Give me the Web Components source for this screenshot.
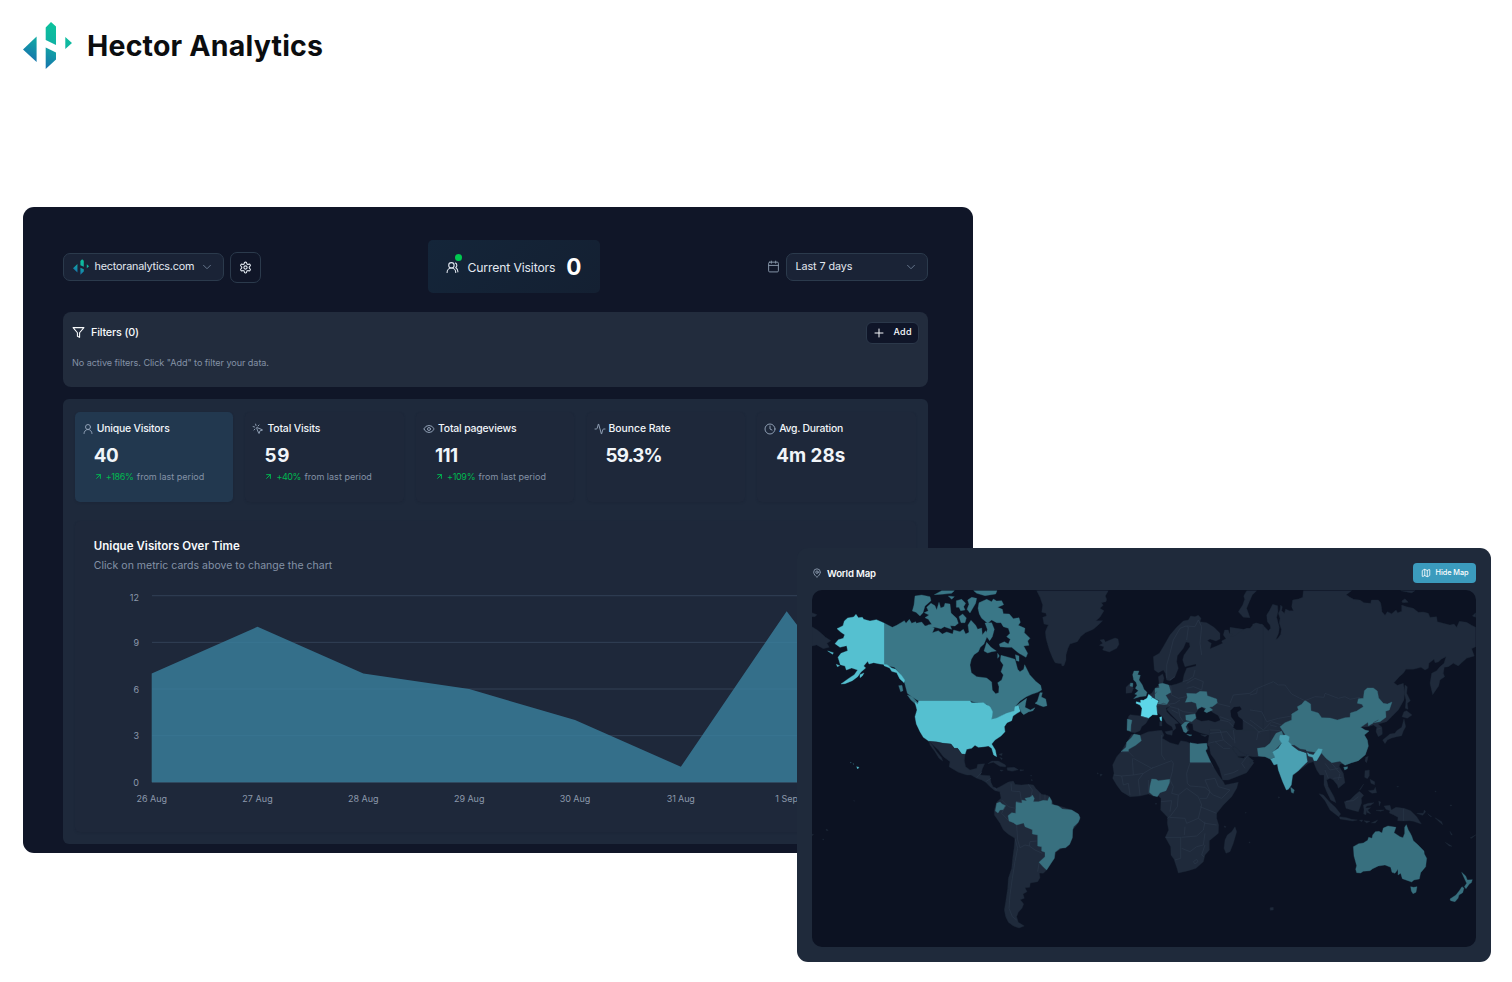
<!DOCTYPE html>
<html lang="en"><head><meta charset="utf-8"><title>Hector Analytics</title>
<style>
html,body{margin:0;height:982px;background:#fff;overflow:hidden;font-family:Inter,"Liberation Sans",sans-serif}
</style></head><body>
<hector-page></hector-page>
<script>
const define=(name,html,setup)=>{
  const t=document.createElement('template');t.innerHTML=html;
  customElements.define(name,class extends HTMLElement{
    constructor(){super();this.attachShadow({mode:'open'}).append(t.content.cloneNode(true));}
    connectedCallback(){if(setup)setup(this,this.shadowRoot);}
  });
};

/* Single-line label whose tracking is tuned to a target width */
define('fit-label',`<style>:host{display:block;line-height:1.2;white-space:nowrap}span{display:inline-block}</style><span><slot></slot></span>`,(el,r)=>{
  const s=r.querySelector('span'),w=+el.getAttribute('w'),n=el.textContent.length;
  if(w&&n>1){const d=(w-s.getBoundingClientRect().width)/(n-1);s.style.letterSpacing=d+'px';s.style.marginRight=-d+'px';}
});

const icons={
 gear:'<path d="M12.22 2h-.44a2 2 0 0 0-2 2v.18a2 2 0 0 1-1 1.73l-.43.25a2 2 0 0 1-2 0l-.15-.08a2 2 0 0 0-2.73.73l-.22.38a2 2 0 0 0 .73 2.73l.15.1a2 2 0 0 1 1 1.72v.51a2 2 0 0 1-1 1.74l-.15.09a2 2 0 0 0-.73 2.73l.22.38a2 2 0 0 0 2.73.73l.15-.08a2 2 0 0 1 2 0l.43.25a2 2 0 0 1 1 1.73V20a2 2 0 0 0 2 2h.44a2 2 0 0 0 2-2v-.18a2 2 0 0 1 1-1.73l.43-.25a2 2 0 0 1 2 0l.15.08a2 2 0 0 0 2.73-.73l.22-.39a2 2 0 0 0-.73-2.73l-.15-.08a2 2 0 0 1-1-1.74v-.5a2 2 0 0 1 1-1.74l.15-.09a2 2 0 0 0 .73-2.73l-.22-.38a2 2 0 0 0-2.73-.73l-.15.08a2 2 0 0 1-2 0l-.43-.25a2 2 0 0 1-1-1.73V4a2 2 0 0 0-2-2z"/><circle cx="12" cy="12" r="3"/>',
 down:'<path d="m5 8.5 7 7 7-7"/>',
 users:'<path d="M18 21a8 8 0 0 0-16 0"/><circle cx="10" cy="8" r="5"/><path d="M22 20c0-3.37-2-6.5-4-8a5 5 0 0 0-.45-8.3"/>',
 user:'<circle cx="12" cy="8" r="5"/><path d="M20 21a8 8 0 0 0-16 0"/>',
 calendar:'<path d="M8 2v4M16 2v4M3 10h18"/><rect width="18" height="18" x="3" y="4" rx="2"/>',
 funnel:'<path d="M22 3H2l8 9.46V19l4 2v-8.54L22 3z"/>',
 plus:'<path d="M4 12h16M12 4v16"/>',
 click:'<path d="M14 4.1 12 6M5.1 8l-2.9-.8M6 12l-1.9 2M7.2 2.2 8 5.1M9.04 9.69a.5.5 0 0 1 .65-.65l11 4.5a.5.5 0 0 1-.07.95l-4.35 1.04a1 1 0 0 0-.74.74l-1.04 4.35a.5.5 0 0 1-.95.07z"/>',
 eye:'<path d="M2.06 12.35a1 1 0 0 1 0-.7 10.75 10.75 0 0 1 19.88 0 1 1 0 0 1 0 .7 10.75 10.75 0 0 1-19.88 0"/><circle cx="12" cy="12" r="3"/>',
 activity:'<path d="M22 12h-2.48a2 2 0 0 0-1.93 1.46l-2.35 8.36a.25.25 0 0 1-.48 0L9.24 2.18a.25.25 0 0 0-.48 0l-2.35 8.36A2 2 0 0 1 4.49 12H2"/>',
 clock:'<circle cx="12" cy="12" r="10"/><path d="M12 6v6l4 2"/>',
 arrow:'<path d="M7 7h10v10M7 17 17 7"/>',
 pin:'<path d="M20 10c0 4.99-5.54 10.19-7.4 11.8a1 1 0 0 1-1.2 0C9.54 20.19 4 14.99 4 10a8 8 0 0 1 16 0"/><circle cx="12" cy="10" r="3"/>',
 map:'<path d="M14.1 5.55a2 2 0 0 0 1.8 0l3.65-1.83A1 1 0 0 1 21 4.62v12.76a1 1 0 0 1-.55.9l-4.55 2.27a2 2 0 0 1-1.8 0l-4.2-2.1a2 2 0 0 0-1.8 0l-3.65 1.83A1 1 0 0 1 3 19.38V6.62a1 1 0 0 1 .55-.9L8.1 3.45a2 2 0 0 1 1.8 0zM15 5.76v15M9 3.24v15"/>'
};
define('line-icon',`<style>:host{display:block;flex:none}svg{display:block}</style><svg viewBox="0 0 24 24" fill="none" stroke="currentColor" stroke-linecap="round" stroke-linejoin="round"></svg>`,(el,r)=>{
  const s=r.querySelector('svg'),z=el.getAttribute('size');s.setAttribute('width',z);s.setAttribute('height',z);
  s.setAttribute('stroke-width',el.getAttribute('weight')||2);s.innerHTML=icons[el.getAttribute('name')];
});
define('hector-logo',`<style>:host{display:block;flex:none}svg{display:block;width:100%;height:100%}</style>
<svg viewBox="0 0 49 47"><defs><linearGradient id="g" gradientUnits="userSpaceOnUse" x1="34" y1="4" x2="14" y2="44"><stop offset="0" stop-color="#0cc29c"/><stop offset=".35" stop-color="#10b4a2"/><stop offset="1" stop-color="#176fae"/></linearGradient></defs>
<g fill="url(#g)"><path d="M0 27.5 13.6 14.4V40zM22.7 5.5 28 0 33 4.5V23L22.7 18zM22.7 25.5 33 30.5V37.5L22.7 47zM42.3 15 49 21 42.3 27z"/></g></svg>`);

define('site-select',`<style>:host{display:flex;box-sizing:border-box;width:161px;height:28px;border:1px solid #2b3a4c;border-radius:7px;background:#1a2336;color:#e2e8f0;align-items:center;padding:0 10px 0 9px;font-size:10.8px}
hector-logo{width:16px;height:16px;margin-right:6px}fit-label{padding-top:2px}line-icon{color:#64748b;margin-left:auto}</style>
<hector-logo></hector-logo><fit-label w="100">hectoranalytics.com</fit-label><line-icon name="down" size="12" weight="2"></line-icon>`);
define('period-select',`<style>:host{display:flex;align-items:center;color:#e2e8f0;font-size:10.8px;gap:6px}line-icon{color:#8796a9}fit-label{padding-top:2px}
div{display:flex;align-items:center;box-sizing:border-box;width:142.5px;height:28px;border:1px solid #2b3a4c;border-radius:7px;background:#1a2336;padding:0 10px 0 9px;justify-content:space-between}div line-icon{color:#64748b}</style>
<line-icon name="calendar" size="13" weight="1.8"></line-icon><div><fit-label w="57">Last 7 days</fit-label><line-icon name="down" size="12" weight="2"></line-icon></div>`);
define('icon-button',`<style>:host{display:grid;place-items:center;box-sizing:border-box;width:31px;height:31px;border:1px solid #2b3a4c;border-radius:7px;color:#e2e8f0}</style><line-icon name="gear" size="13"></line-icon>`);
define('live-visitors',`<style>:host{display:flex;box-sizing:border-box;width:172px;height:53px;border-radius:5px;background:linear-gradient(135deg,#142539,#142032);align-items:center;padding:0 18px;color:#e2e8f0;font-size:12.2px}
.u{position:relative;margin:1px 9px 0 0}.u i{position:absolute;left:9px;top:-7px;width:7px;height:7px;border-radius:50%;background:#00c950}fit-label{padding-top:2px}b{font-size:22.5px;line-height:1;color:#fff;margin:1px 0 0 auto}</style>
<span class="u"><line-icon name="users" size="13"></line-icon><i></i></span><fit-label w="88">Current Visitors</fit-label><b>0</b>`);
define('filter-panel',`<style>:host{display:block;box-sizing:border-box;height:74.5px;border-radius:8px;background:#222c3d;color:#f8fafc;padding:9.4px 9.5px 0}
.r{display:flex;align-items:center;font-size:10.8px;font-weight:500;height:22px}.r>line-icon{margin-right:6px}.r>fit-label{padding-top:1px}
button{all:unset;box-sizing:border-box;margin-left:auto;width:53px;height:22px;display:flex;align-items:center;justify-content:space-between;background:#0f1528;border:1px solid #2b384a;border-radius:6px;padding:0 6px;font-size:9px;font-weight:500}
.n{font-size:9.1px;color:#8492a6;margin-top:14px}</style>
<div class="r"><line-icon name="funnel" size="13"></line-icon><fit-label w="48">Filters (0)</fit-label><button><line-icon name="plus" size="12"></line-icon><fit-label w="18">Add</fit-label></button></div><fit-label class="n" w="197">No active filters. Click "Add" to filter your data.</fit-label>`);

define('metric-card',`<style>:host{display:block;box-sizing:border-box;height:90px;border-radius:5px;color:#f1f5f9;background:#1e283a;padding:9px 7px;box-shadow:0 1px 2px #1a243566}
:host([active]){background:#22384f}
.h{display:flex;align-items:center;gap:3px;font-size:10.4px;font-weight:500;height:14px}.h line-icon{color:#94a3b8;margin-top:2px}.h fit-label{padding-top:2px}
.v{font-size:18.8px;font-weight:700;margin:10.4px 0 0 12px}.t{display:flex;align-items:center;font-size:9px;color:#8492a6;margin:3.6px 0 0 12px}
.t line-icon,.g{color:#00b850}.g{margin:0 3px 0 3px}.t[hidden]{display:none}</style>
<div class="h"></div><div class="v"></div><div class="t" hidden></div>`,(el,r)=>{
  const a=k=>el.getAttribute(k);
  r.querySelector('.h').innerHTML=`<line-icon name="${a('icon')}" size="12" weight="1.9"></line-icon><fit-label w="${a('lw')}">${a('label')}</fit-label>`;
  r.querySelector('.v').innerHTML=`<fit-label w="${a('vw')}">${a('value')}</fit-label>`;
  if(a('trend')){const t=r.querySelector('.t');t.hidden=false;t.innerHTML=`<line-icon name="arrow" size="9" weight="2.6"></line-icon><fit-label class="g" w="${a('tw')}">${a('trend')}</fit-label><fit-label w="67.5">from last period</fit-label>`;}
});

define('visitors-chart',`<style>:host{display:block;box-sizing:border-box;height:311px;border-radius:5px;background:#1e283a;padding:19.5px 0 0 19px;box-shadow:0 1px 2px #1a243566}
.a{font-size:11.5px;font-weight:600;color:#f8fafc}.b{font-size:10.5px;color:#8492a6;margin-top:6px}svg{display:block;margin:10.5px 0 0 -19px}text{font-size:9px;fill:#8c99ac}</style>
<fit-label class="a" w="146">Unique Visitors Over Time</fit-label><fit-label class="b" w="238.5">Click on metric cards above to change the chart</fit-label>
<svg width="841" height="230" viewBox="75 583 841 230"></svg>`,(el,r)=>{
  const v=[7,10,7,6,4,1,11,2],y=n=>782.3-15.55*n,x=i=>151.7+105.83*i;let s='';
  for(const n of [12,9,6,3,0])s+=`<path d="M152 ${y(n)}H900" stroke="#324055" stroke-width="1"/><text x="139" y="${y(n)+(n==12?5.6:3.6)}" text-anchor="end">${n}</text>`;
  s+=`<path d="M${x(0)} ${y(0)}L${v.map((n,i)=>x(i)+' '+y(n)).join('L')}V${y(0)}Z" fill="#3a819f" fill-opacity=".8"/>`;
  ['26 Aug','27 Aug','28 Aug','29 Aug','30 Aug','31 Aug','1 Sep'].forEach((t,i)=>s+=`<text x="${x(i)}" y="801.5" text-anchor="middle"${i<6?` textLength="${i==5?28:30.5}"`:''}>${t}</text>`);
  r.querySelector('svg').innerHTML=s;
});

define('analytics-dashboard',`<style>:host{display:block;box-sizing:border-box;width:950px;height:646px;border-radius:11px;background:#101628;padding:33.4px 45px 0 39.5px;overflow:hidden}
header{display:flex;align-items:center;justify-content:space-between}.l{display:flex;align-items:center;gap:6px}icon-button{margin-top:1px}filter-panel{margin-top:19px}
.p{box-sizing:border-box;margin-top:12.6px;background:#1e293b;border-radius:6px;padding:12.5px 12.3px;height:444.5px}.m{display:grid;grid-template-columns:repeat(5,158.5px);justify-content:space-between}visitors-chart{margin-top:19px}</style>
<header><div class="l"><site-select></site-select><icon-button></icon-button></div><live-visitors></live-visitors><period-select></period-select></header>
<filter-panel></filter-panel>
<div class="p"><div class="m">
<metric-card active icon="user" label="Unique Visitors" lw="73" value="40" vw="25" trend="+186%" tw="28"></metric-card>
<metric-card icon="click" label="Total Visits" lw="53" value="59" vw="25" trend="+40%" tw="25"></metric-card>
<metric-card icon="eye" label="Total pageviews" lw="78.5" value="111" vw="23" trend="+109%" tw="28.5"></metric-card>
<metric-card icon="activity" label="Bounce Rate" lw="62" value="59.3%" vw="57"></metric-card>
<metric-card icon="clock" label="Avg. Duration" lw="64" value="4m 28s" vw="69"></metric-card>
</div><visitors-chart></visitors-chart></div>`);

/* Map regions: [origin x, origin y, shapes]; shape points are in thirds of a pixel */
const L='#1f2a3b',CA='#3a7787',US='#55c0d0',T='#38707f',SEA='#0c1222',IN='#4aa0b2',FR='#5dd6e8';
const regions=[
[1250,540,[
[L,'-60,262 -20,268 0,265 8,256 18,248 28,254 35,252 45,262 55,272 62,265 60,255 52,245 50,225 58,212 68,193 83,197 84,215 80,232 88,262 86,280 78,298 84,295 92,283 94,268 88,250 90,235 85,220 90,210 92,195 97,200 95,212 103,220 107,207 118,212 130,212 125,200 128,180 145,177 158,172 160,152 305,152 289,164 300,172 311,178 330,180 342,188 362,190 364,180 385,180 392,188 395,205 396,215 405,226 412,215 425,221 438,210 443,218 455,214 455,195 470,200 490,205 505,217 520,216 535,220 540,232 560,230 562,245 580,250 600,255 612,252 620,262 628,244 650,247 665,256 677,262 677,320 665,326 673,348 650,355 635,368 625,378 610,370 595,380 583,382 580,400 584,410 570,420 566,438 548,464 540,430 545,400 560,392 568,382 582,370 588,350 575,357 565,366 555,368 552,358 537,370 535,385 525,390 513,382 490,388 468,388 460,400 448,410 432,428 442,436 460,430 464,455 462,480 445,510 425,530 410,545 385,552 396,562 397,583 385,590 378,575 380,562 370,555 355,560 332,562 345,570 357,573 343,585 352,600 355,620 345,645 325,662 305,668 290,672 270,672 268,680 280,700 285,728 265,745 262,735 250,720 240,715 230,720 235,740 252,770 258,788 242,780 230,755 222,735 222,705 210,705 200,690 190,665 175,670 125,710 118,745 110,748 95,710 82,670 65,660 50,650 25,648 -60,650'],
[L,'455,183 465,176 475,187 458,188','452,152 495,152 485,159 470,156','667,228 677,218 677,232','465,435 472,440 470,460 481,482 472,490 474,508 466,505 468,480 463,460','462,515 470,512 486,525 472,535 456,530','462,537 467,560 460,573 455,587 440,590 425,594 412,600 405,611 398,600 420,582 435,580 440,572 455,562'],
[T,'165,481 182,492 183,512 205,519 215,533 240,534 262,540 285,533 300,532 301,519 320,513 340,500 336,493 322,490 325,476 340,475 343,452 352,444 370,444 382,453 386,474 400,490 412,492 426,486 418,510 407,514 408,532 390,545 371,548 355,558 354,547 332,562 345,570 357,573 343,585 352,600 355,618 346,644 325,662 305,668 285,676 270,664 245,668 228,655 215,640 185,635 150,630 120,612 110,590 100,575 90,560 105,548 125,540 125,522 145,510 142,500 155,493']
]],
[1020,540,[
[L,'50,152 60,172 68,195 65,217 78,220 79,228 68,232 72,252 85,255 80,265 76,275 78,295 82,310 88,330 98,355 105,368 112,370 124,371 126,378 132,377 138,360 138,345 144,325 150,312 172,305 182,290 196,278 220,268 235,255 248,242 228,242 240,232 252,212 240,205 250,196 244,188 258,185 260,178 256,168 265,152'],
[L,'240,300 252,298 256,306 270,300 285,294 294,297 297,313 290,325 268,336 248,330 252,320 238,316 248,310'],
[L,'680,152 710,152 697,165 688,185 680,205 690,233 670,232 655,215 668,195 674,178 671,168'],
[L,'400,350 418,340 430,320 450,285 470,262 490,243 505,240 512,228 525,230 535,226 543,235 540,245 560,248 582,262 600,280 600,297 588,303 570,297 562,302 574,310 570,326 590,318 608,310 605,303 618,296 610,285 614,270 625,270 628,280 638,283 632,290 642,289 665,272 680,265 700,268 698,252 712,250 730,255 730,585 565,585 540,578 520,570 518,552 505,548 495,545 503,560 508,572 495,575 485,555 470,540 450,520 440,508 448,500 438,504 440,515 452,528 466,540 476,550 464,552 468,565 460,572 456,560 440,550 428,530 415,520 400,500 390,475 385,465 395,460 405,445 418,435 415,410 428,402 432,415 428,432 445,436 455,436 470,432 488,425 492,405 500,385 528,378 528,372 495,380 488,360 492,345 510,320 508,308 498,306 490,325 472,347 470,365 475,385 465,410 450,422 440,420 436,400 430,390 415,398 403,390'],
[L,'325,530 330,524 363,528 385,538 378,550 365,560 360,572 345,578 335,577 322,570 325,545','318,442 332,428 340,445 335,458 318,460','435,575 458,571 456,586 440,582','419,545 426,543 426,558 419,558'],
[SEA,'530,537 528,520 538,505 548,503 556,511 560,518 572,512 576,517 594,527 600,540 585,546 566,540 545,543','632,512 642,502 660,500 664,508 651,517 655,530 668,540 668,568 655,574 640,562 646,546 634,530'],
[T,'500,460 528,461 540,454 560,455 562,467 590,477 592,489 577,500 568,501 578,510 560,518 552,514 558,505 545,500 532,508 528,490 515,485 496,487 502,472','497,526 525,522 528,534 515,545 498,540','484,556 495,546 509,545 502,552 497,560 503,572 498,579 491,575','500,583 516,585 510,588','322,537 336,541 333,555 332,574 321,571','405,445 418,443 416,432 428,430 446,435 453,457 437,466 447,482 440,494 414,492 418,482 405,475','342,393 357,393 353,404 361,406 357,420 367,435 372,448 381,457 378,468 360,470 341,476 352,465 344,462 355,452 346,445 351,436 348,427 341,420 338,404','332,429 339,430 338,440 330,438'],
[CA,'45,490 52,484 60,458 67,458 64,471 77,477 81,497 70,500 58,496'],
[FR,'386,463 399,474 415,483 409,498 412,525 398,524 385,535 363,528 366,505 360,495 348,490 349,485 362,488 362,480 370,481 381,475','419,532 425,530 425,543 421,541']
]],
[795,540,[
[CA,'267,249 292,262 305,256 318,248 328,242 333,250 343,238 350,250 362,245 364,250 380,246 390,258 402,256 418,265 412,278 430,272 442,282 455,276 473,282 476,270 495,275 505,268 512,282 522,277 519,255 528,241 542,256 548,268 560,264 562,284 572,272 579,283 567,312 556,322 550,335 537,344 529,358 525,375 529,398 545,410 575,414 590,426 592,450 602,461 611,458 612,440 608,428 620,420 625,405 618,395 625,375 616,362 618,346 645,353 660,358 668,388 675,395 686,388 689,374 698,392 704,404 722,424 737,436 740,450 728,457 710,463 694,470 675,483 660,500 678,487 695,475 692,490 690,502 706,510 720,503 714,512 700,516 686,524 680,518 672,500 662,514 635,522 605,534 590,538 592,515 575,492 548,489 525,483 371,483 350,470 337,460 328,426 316,402 298,382 267,375'],
[CA,'360,168 380,165 405,170 408,182 390,198 384,218 375,228 363,217 352,213 357,195','395,202 408,190 420,197 425,210 432,187 437,204 447,200 450,190 465,192 468,219 485,235 490,250 480,258 466,257 470,268 448,260 438,266 420,262 400,263 398,255 410,253 400,238 390,233 402,225 388,218 400,212','418,164 440,152 478,152 470,160 440,163','536,152 606,152 602,162 570,167 545,160','484,182 500,178 512,190 506,200 510,210 497,212 492,202 484,202','518,180 530,172 545,175 542,190 525,219 516,208 522,193','492,230 503,222 514,234 510,248 498,248','549,205 552,188 575,178 590,185 595,177 605,183 620,182 626,194 608,202 622,208 625,221 643,222 655,236 672,233 676,247 670,256 690,265 688,278 705,295 698,303 702,316 686,318 698,340 693,352 672,340 650,322 635,322 615,320 613,312 628,305 640,312 646,298 635,290 645,280 640,265 625,260 618,248 605,248 590,240 578,250 560,235 553,222','570,249 590,248 598,268 592,290 584,302 573,287 577,268','567,333 575,307 588,322 604,333 590,335 578,339','608,340 613,348 608,355','661,344 672,348 672,364 664,362','337,465 352,470 370,490 364,494 348,480','311,437 321,436 324,452 317,455','460,168 478,170 470,178'],
[US,'267,249 244,239 225,243 206,238 202,232 190,233 183,223 176,231 158,234 148,243 144,257 126,266 138,277 149,284 145,295 130,299 120,311 135,322 155,317 158,332 138,340 129,352 136,374 150,378 154,390 170,384 188,390 178,404 160,416 138,432 150,431 172,422 188,410 198,396 212,384 206,378 218,364 222,372 236,368 255,372 276,374 290,384 302,388 318,404 329,420 327,428 314,416 305,398 290,394 284,384 267,377','195,404 207,399 202,408 195,413','98,333 115,338 113,343','124,373 134,377 127,380','371,483 525,483 530,488 548,489 565,488 585,500 593,515 590,538 605,534 635,520 658,513 660,500 670,497 676,514 666,520 654,528 650,542 636,548 628,560 630,575 618,588 600,600 590,612 601,630 605,650 596,645 590,625 580,618 568,620 550,622 540,616 530,625 515,628 510,643 500,642 488,625 478,625 468,612 445,610 425,605 402,604 385,592 375,575 364,552 360,530 366,510 360,487 368,493'],
[L,'51,260 70,272 92,292 108,302 96,310 103,322 85,326 65,315 51,318','51,218 66,224 60,230 51,230']
]],
[795,745,[
[L,'402,-11 425,-9 445,-5 468,-3 478,10 488,10 500,27 510,28 508,48 512,65 525,75 545,70 548,58 569,56 562,72 557,90 585,92 588,112 594,125 605,130 615,125 640,111 655,108 660,118 680,120 700,118 715,120 722,130 740,148 760,152 770,165 775,180 800,185 830,195 852,208 855,222 845,240 833,255 832,280 822,300 800,310 782,322 778,340 765,360 752,378 745,385 733,384 735,398 728,410 706,414 704,427 690,428 696,440 684,447 688,460 676,464 686,477 681,490 670,502 665,515 670,532 688,543 672,549 655,543 640,532 632,515 628,495 632,470 638,430 640,400 650,370 653,340 657,310 660,280 640,268 625,255 615,235 598,210 598,195 605,172 618,160 614,140 600,137 585,125 572,112 560,105 545,100 528,90 515,90 490,82 462,65 465,50 445,35 430,15','402,-11 412,0 425,20 440,38 443,48 432,40 420,20 405,0','578,56 590,48 610,48 632,60 632,66 614,64 595,52','636,68 658,67 670,74 652,79 637,76','615,75 625,76 618,79','675,74 687,75 676,78','612,28 622,25 620,32','614,37 622,40 620,44','708,90 710,93 707,93','710,103 713,106 709,107','93,252 100,256 95,257','83,282 87,283 84,285','51,268 56,268 52,272','176,166 179,168 177,169','908,83 910,86 907,87','915,88 922,88 917,94'],
[T,'663,170 680,174 680,165 695,168 690,160 705,157 712,150 718,160 715,170 730,170 745,166 758,167 763,155 770,168 770,178 790,183 802,192 830,195 850,207 855,218 850,232 836,245 833,254 832,278 824,298 812,308 795,310 780,322 778,340 768,355 755,375 745,366 732,352 750,335 750,322 740,318 740,305 728,303 728,270 712,267 712,254 690,245 686,234 665,240 655,233 642,228 639,212 650,203 662,205','605,175 615,171 621,177 632,182 625,194 615,195 609,204 601,198'],
[US,'185,65 192,67 188,72'],
[CA,'166,52 169,53 167,54','174,56 177,57 175,58']
]],
[1090,730,[
[L,'125,13 150,16 175,5 200,2 215,1 222,15 217,25 240,38 265,45 272,32 290,35 300,40 325,42 345,40 355,58 345,62 362,95 370,110 385,135 400,155 405,165 430,160 445,157 440,175 425,200 400,225 380,250 380,265 386,285 385,310 358,332 358,360 345,375 340,395 318,415 295,422 265,429 261,415 252,388 243,375 242,350 226,322 236,300 232,280 233,262 212,240 213,205 205,198 190,198 175,192 150,198 120,200 95,185 80,165 68,145 72,130 68,105 80,80 93,65','360,0 355,30 352,44 358,50 362,72 375,90 388,115 398,150 415,150 440,140 470,128 492,98 483,88 472,75 460,85 445,82 438,70 428,58 430,50 438,52 450,65 470,75 490,80 540,80 540,0','435,290 440,305 430,340 420,365 408,370 402,355 405,330 412,315 425,305','196,220 200,220 198,224','402,288 408,290 405,293','466,247 469,248 467,250','477,336 481,337 478,339','332,14 352,15 345,20'],
[T,'300,38 322,42 350,40 352,54 347,62 363,98 300,98','185,147 198,148 205,152 240,148 238,160 228,182 210,188 202,200 190,197 178,187 180,168','93,65 108,52 110,37 124,23 132,12 150,16 154,32 137,46 116,58 115,65']
]],
[1250,730,[
[T,'22,55 45,52 60,40 78,10 95,3 100,18 90,22 94,40 70,65 75,80 62,88 45,80 25,78','281,112 293,110 292,116 284,120','122,172 133,180 130,190 124,187','310,350 326,341 340,339 353,331 356,322 366,325 368,315 376,305 387,304 396,309 400,294 414,288 438,292 432,308 450,320 459,323 464,310 464,292 469,284 475,300 480,308 485,318 490,332 502,343 522,363 523,372 530,385 527,410 512,428 508,447 492,450 485,456 457,446 452,430 444,435 444,418 435,430 426,427 422,412 405,405 385,408 368,416 360,422 340,424 332,429 320,428 317,418 320,407 312,378','482,470 491,472 501,470 498,487 489,491 484,483','635,427 647,438 652,450 667,449 664,458 658,462 648,476 643,470 650,460 644,447','636,470 642,475 638,488 627,495 624,505 615,515 602,512 600,507 618,495 628,482'],
[IN,'90,16 108,15 118,20 116,35 125,45 145,60 168,68 172,95 155,112 145,122 128,135 124,165 115,178 109,180 98,155 85,120 82,102 72,105 62,88 75,82 68,66 85,55 95,40 88,28','172,68 178,72 190,75 205,56 217,58 212,72 200,92 192,92 188,82 175,78'],
[L,'125,46 133,46 150,57 168,60 168,68 145,61','345,122 358,120 358,137 352,146 344,142','360,148 374,155 374,164 363,160','355,182 372,180 376,172 380,188 366,190','341,162 332,178 328,180','283,215 300,210 315,195 328,184 341,196 334,205 335,218 325,245 305,240 288,235','207,191 220,195 238,215 256,232 272,252 266,260 240,240 225,212','268,260 290,263 305,268 322,270 308,273 270,267','328,271 338,270 335,275','342,272 360,274 350,279','364,279 383,270 376,279','340,225 355,220 372,218 362,226 350,228 347,234 362,233 353,240 362,251 352,248 350,241 348,254 341,252 342,239','386,213 392,216 388,228','378,241 402,240 392,244','402,228 420,226 424,240 438,232 462,235 482,242 500,260 514,282 490,274 478,272 460,273 443,272 444,262 430,254 418,249 420,242 408,238','500,250 520,250 523,240 527,245 518,256','533,251 545,260 540,259','555,263 575,275 578,284 566,274','600,304 607,315 603,314','586,337 606,349 598,348','660,324 678,314 665,325','347,82 355,79 350,98 345,93','60,533 70,532 70,540 61,541','85,200 89,202 86,205','555,183 559,185 556,186','600,225 606,226 602,228','440,169 446,170 442,171','0,100 0,84 11,92']
]]
];
/* Hairline borders: [origin x, origin y, path] */
const borders=[
[1090,730,'M130,85L185,115 245,92 250,100 247,125 240,150M215,15L215,75 225,90M300,98L298,105 290,130 292,160 300,168 325,170 345,172M363,98L370,112M127,85L130,135 95,138 72,135M95,65L115,65 130,80M130,135L160,130 190,112M160,130L145,150 150,195M95,138L100,165 115,160 120,195M175,150V190M240,150L250,170 245,190 265,195 290,175M265,195L262,230 240,260 232,265M213,215L245,212 240,245M290,175L325,200 335,225 325,265 290,280 285,265 240,262M345,150L360,185 350,205 330,205M345,172L370,195 395,205 420,180 385,170 375,145 345,150M330,230L380,250M325,265L345,280 380,285M226,322L275,322 320,318 340,300 345,275M285,290L283,315 M272,322V385L255,390M275,355L300,365 320,350 340,345 345,310M345,345L335,375 342,380M310,395L320,388 324,395 315,402ZM355,40L375,35 400,55 420,55M360,0L390,0 400,30 375,35M400,30L425,50M402,135L430,128 445,120M475,75L455,100 465,115M300,98L363,98M430,0L435,40'],
[1020,540,'M440,415L440,375 450,340 460,300 480,265 498,258 505,262 500,300M500,258L525,260 535,240 545,260 540,310 545,345M488,425L505,420 520,410 525,390M500,445L520,440 545,450 550,425 525,415 500,430M452,437L455,465 475,475 498,470M443,493L465,490 480,480M450,500L470,505 490,515 525,520M475,505L480,530 490,545M455,510L475,520M590,490L630,500M600,540L625,545 640,560M570,580L620,575 640,600M630,490L640,465 690,460 710,445M668,540L700,560 720,580M600,530L632,542M410,498L430,490 450,497M363,529L385,535M395,475L410,455M465,410L450,420'],
[1250,540,'M0,465L20,460 22,445 70,425 85,435 105,435 125,462 150,475 165,482 195,470 222,472 225,460 265,475 285,470 300,478 330,472M0,510L35,515 50,545 85,535 125,528M0,540L40,570 65,545 95,555M20,600L25,575 60,570 90,572M60,555L80,560M370,548L385,540M380,568L392,565M225,670L240,690 265,685M235,715L225,690M245,670L270,700 265,720M250,715L275,712'],
[795,745,'M660,280L668,310 660,350 652,400 645,450 642,490 652,515 665,525M665,240L668,285 675,308 690,300 703,303 705,290 725,288M703,303L720,315 742,325M663,170L680,172 675,140 650,138 648,115M700,118L712,135 708,155M735,145V165M750,148V165M620,165L640,185 662,190M632,182L620,205 642,228M732,355L728,380M545,98L560,82M572,110L588,100M598,128L605,135'],
[1250,730,'M460,236V272M288,214L310,212 325,200']
];
define('world-map',`<style>:host{display:block;width:664px;height:357px;border-radius:10px;overflow:hidden;background:#0c1222}svg{display:block}</style><svg width="664" height="357" viewBox="812 590 664 357"></svg>`,(el,r)=>{
  let s='';
  for(const [x,y,shapes] of regions){s+=`<g transform="translate(${x} ${y}) scale(.33333)">`;
    for(const [c,...ps] of shapes)for(const p of ps)s+=`<path d="M${p}Z" fill="${c}" stroke="${c}" stroke-width="1" stroke-linejoin="round"/>`;s+='</g>';}
  for(const [x,y,d] of borders)s+=`<path transform="translate(${x} ${y}) scale(.33333)" d="${d}" fill="none" stroke="#2c394b" stroke-width="1.8" stroke-linejoin="round"/>`;
  r.querySelector('svg').innerHTML=s;
});
define('map-panel',`<style>:host{display:block;box-sizing:border-box;width:694px;height:414px;border-radius:11px;background:#1f2a3b;padding:15px;color:#f8fafc}
header{display:flex;align-items:center;height:20px;margin-bottom:7px;font-size:9.6px;font-weight:600}header>line-icon{color:#94a3b8;margin-right:5px}header>fit-label{padding-top:1px}
button{all:unset;box-sizing:border-box;margin-left:auto;width:63px;height:20px;border-radius:4px;background:#3b9bbd;display:flex;align-items:center;gap:5px;padding-left:7.5px;font-size:7.3px;font-weight:500;color:#fff}button fit-label{padding-top:1px}</style>
<header><line-icon name="pin" size="10"></line-icon><fit-label w="49">World Map</fit-label><button><line-icon name="map" size="10"></line-icon><fit-label w="33">Hide Map</fit-label></button></header><world-map></world-map>`);
define('hector-page',`<style>:host{display:block;position:relative;width:1512px;height:982px;background:#fff;overflow:hidden}
.brand{display:flex;align-items:center;height:47px;padding:22px 0 0 23px;gap:15px;margin-bottom:138px;color:#0b0d0f;font-size:28.5px;font-weight:700}.brand hector-logo{width:49px;height:47px}.brand fit-label{padding-top:2px}
analytics-dashboard{margin-left:23px}map-panel{position:absolute;left:797px;top:548px}</style>
<div class="brand"><hector-logo></hector-logo><fit-label w="236">Hector Analytics</fit-label></div><analytics-dashboard></analytics-dashboard><map-panel></map-panel>`);
</script></body></html>
